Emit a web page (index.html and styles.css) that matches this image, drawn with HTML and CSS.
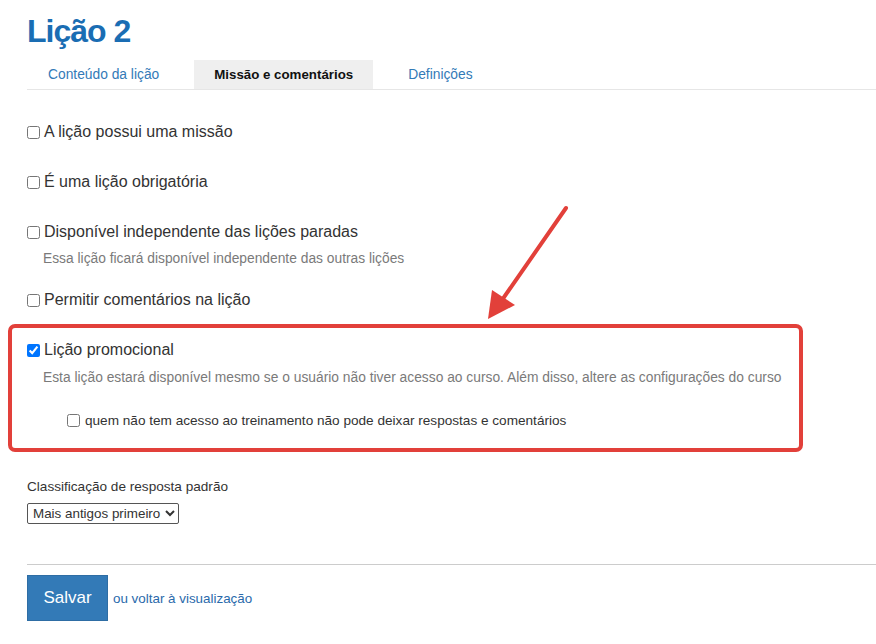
FILE: index.html
```html
<!DOCTYPE html>
<html lang="pt">
<head>
<meta charset="utf-8">
<title>Lição 2</title>
<link rel="stylesheet" href="styles.css">
</head>
<body>
<div class="page">
  <h1 class="title">Lição 2</h1>
  <ul class="tabs">
    <li class="tab">Conteúdo da lição</li>
    <li class="tab active">Missão e comentários</li>
    <li class="tab">Definições</li>
  </ul>

  <div class="fields">
    <label class="field"><input type="checkbox" class="cb"> A lição possui uma missão</label>
    <label class="field"><input type="checkbox" class="cb"> É uma lição obrigatória</label>
    <div class="field-group">
      <label class="field"><input type="checkbox" class="cb"> Disponível independente das lições paradas</label>
      <p class="hint">Essa lição ficará disponível independente das outras lições</p>
    </div>
    <label class="field last"><input type="checkbox" class="cb"> Permitir comentários na lição</label>

    <div class="highlight">
      <label class="field"><input type="checkbox" class="cb" checked> Lição promocional</label>
      <p class="hint">Esta lição estará disponível mesmo se o usuário não tiver acesso ao curso. Além disso, altere as configurações do curso</p>
      <label class="sub"><input type="checkbox" class="cb"> quem não tem acesso ao treinamento não pode deixar respostas e comentários</label>
    </div>
  </div>

  <div class="sort">
    <div class="sort-label">Classificação de resposta padrão</div>
    <select class="select">
      <option>Mais antigos primeiro</option>
    </select>
  </div>

  <div class="actions">
    <button class="btn">Salvar</button>
    <a class="back" href="#">ou voltar à visualização</a>
  </div>
</div>

<svg class="arrow" width="876" height="644" viewBox="0 0 876 644">
  <line x1="566" y1="208" x2="500" y2="303" stroke="#e2403a" stroke-width="4" stroke-linecap="round"/>
  <polygon points="488,319 492,290 515,305" fill="#e2403a"/>
</svg>
</body>
</html>
```

FILE: styles.css
```css
* { box-sizing: border-box; }

html, body {
  margin: 0;
  padding: 0;
  background: #fff;
}

body {
  font-family: "Liberation Sans", Arial, sans-serif;
  color: #333;
  position: relative;
  overflow: hidden;
  width: 876px;
  height: 644px;
}

.page {
  padding: 15px 0 0 27px;
}

.title {
  margin: 0;
  font-size: 32px;
  line-height: 32px;
  font-weight: bold;
  color: #1a6db3;
  letter-spacing: -1px;
}

.tabs {
  list-style: none;
  margin: 13px 0 0 0;
  padding: 0 0 0 1px;
  display: flex;
  gap: 15px;
  border-bottom: 1px solid #e6e6e6;
}

.tab {
  padding: 0 20px;
  height: 29px;
  line-height: 29px;
  font-size: 13.8px;
  color: #337ab7;
}

.tab.active {
  background: #efefef;
  color: #111;
  font-weight: bold;
  font-size: 13.3px;
}

.fields {
  padding-top: 32px;
  display: flex;
  flex-direction: column;
}

.field {
  display: flex;
  align-items: center;
  height: 20px;
  font-size: 16px;
  color: #333;
  margin-bottom: 30px;
}

.field.last { margin-bottom: 0; }

.cb {
  margin: 0 4px 0 0;
  width: 13px;
  height: 13px;
}

.field-group { margin-bottom: 22px; }
.field-group .field { margin-bottom: 0; }

.hint {
  margin: 8px 0 0 16px;
  font-size: 13.8px;
  line-height: 18px;
  color: #7a7a7a;
}

.highlight {
  margin: 14px 0 0 -19px;
  width: 795px;
  border: 4px solid #e2403a;
  border-radius: 7px;
  padding: 12px 0 18px 15px;
}

.highlight .field { margin-bottom: 0; }
.highlight .hint { margin-top: 9px; }

.sub {
  display: flex;
  align-items: center;
  height: 20px;
  margin: 23px 0 0 40px;
  font-size: 13.6px;
  color: #333;
}

.sub .cb { margin-right: 5px; }

.sort { margin-top: 26px; }

.sort-label {
  font-size: 13.6px;
  line-height: 18px;
  color: #333;
}

.select {
  margin-top: 7px;
  height: 21px;
  font-family: "Liberation Sans", Arial, sans-serif;
  font-size: 13.4px;
  color: #333;
  border: 1px solid #555;
  border-radius: 2px;
  background: #fff;
  padding: 0 1px;
}

.actions {
  margin-top: 40px;
  border-top: 1px solid #ccc;
  padding-top: 10px;
  display: flex;
  align-items: center;
}

.btn {
  width: 81px;
  height: 46px;
  background: #337ab7;
  border: 1px solid #2e6da4;
  color: #fff;
  font-family: "Liberation Sans", Arial, sans-serif;
  font-size: 17px;
  padding: 0;
}

.back {
  margin-left: 5px;
  font-size: 13.4px;
  color: #2a6aab;
  text-decoration: none;
}

.arrow {
  position: absolute;
  left: 0;
  top: 0;
  pointer-events: none;
}
```
